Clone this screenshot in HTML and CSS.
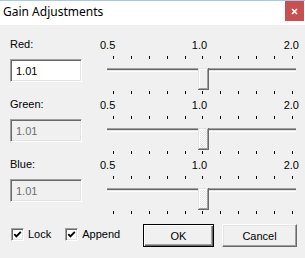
FILE: index.html
```html
<!DOCTYPE html>
<html lang="en">

<head>
    <meta charset="UTF-8">
    <meta name="viewport" content="width=device-width, initial-scale=1.0">
    <title>Gain Adjustments</title>
    <link rel="stylesheet" href="styles.css">
</head>

<body>
    <div class="window">
        <div class="titlebar">
            <span class="title">Gain Adjustments</span>
            <div class="close-btn">
                <svg width="19" height="20" viewBox="0 0 19 20">
                    <rect width="19" height="20" fill="#c75050"/>
                    <path d="M7 8 L12 13 M12 8 L7 13" stroke="#ffffff" stroke-width="1.7"/>
                </svg>
            </div>
        </div>

        <div class="content">
            <div class="row">
                <div class="field">
                    <label for="red">Red:</label>
                    <input id="red" type="text" value="1.01">
                </div>
                <div class="slider">
                    <div class="scale"><span>0.5</span><span>1.0</span><span>2.0</span></div>
                    <div class="ticks"><i></i><i></i><i></i><i></i><i></i><i></i><i></i><i></i><i></i><i></i><i></i></div>
                    <div class="track-area">
                        <div class="track"></div>
                        <svg class="thumb" width="11" height="22" viewBox="0 0 11 22">
                            <rect width="11" height="22" fill="#696969"/>
                            <rect width="10" height="21" fill="#e3e3e3"/>
                            <rect x="1" y="1" width="9" height="20" fill="#a0a0a0"/>
                            <rect x="1" y="1" width="8" height="19" fill="#fff"/>
                            <rect x="2" y="2" width="7" height="18" fill="#f0f0f0"/>
                        </svg>
                    </div>
                    <div class="ticks"><i></i><i></i><i></i><i></i><i></i><i></i><i></i><i></i><i></i><i></i><i></i></div>
                </div>
            </div>

            <div class="row">
                <div class="field">
                    <label for="green">Green:</label>
                    <input id="green" type="text" value="1.01" disabled>
                </div>
                <div class="slider">
                    <div class="scale"><span>0.5</span><span>1.0</span><span>2.0</span></div>
                    <div class="ticks"><i></i><i></i><i></i><i></i><i></i><i></i><i></i><i></i><i></i><i></i><i></i></div>
                    <div class="track-area">
                        <div class="track"></div>
                        <svg class="thumb" width="11" height="22" viewBox="0 0 11 22">
                            <defs><pattern id="dots-g" width="2" height="2" patternUnits="userSpaceOnUse"><rect width="2" height="2" fill="#e3e3e3"/><rect width="1" height="1" fill="#fff"/><rect x="1" y="1" width="1" height="1" fill="#fff"/></pattern></defs>
                            <rect width="11" height="22" fill="#696969"/>
                            <rect width="10" height="21" fill="#e3e3e3"/>
                            <rect x="1" y="1" width="9" height="20" fill="#a0a0a0"/>
                            <rect x="1" y="1" width="8" height="19" fill="#fff"/>
                            <rect x="2" y="2" width="7" height="18" fill="url(#dots-g)"/>
                        </svg>
                    </div>
                    <div class="ticks"><i></i><i></i><i></i><i></i><i></i><i></i><i></i><i></i><i></i><i></i><i></i></div>
                </div>
            </div>

            <div class="row">
                <div class="field">
                    <label for="blue">Blue:</label>
                    <input id="blue" type="text" value="1.01" disabled>
                </div>
                <div class="slider">
                    <div class="scale"><span>0.5</span><span>1.0</span><span>2.0</span></div>
                    <div class="ticks"><i></i><i></i><i></i><i></i><i></i><i></i><i></i><i></i><i></i><i></i><i></i></div>
                    <div class="track-area">
                        <div class="track"></div>
                        <svg class="thumb" width="11" height="22" viewBox="0 0 11 22">
                            <defs><pattern id="dots-b" width="2" height="2" patternUnits="userSpaceOnUse"><rect width="2" height="2" fill="#e3e3e3"/><rect width="1" height="1" fill="#fff"/><rect x="1" y="1" width="1" height="1" fill="#fff"/></pattern></defs>
                            <rect width="11" height="22" fill="#696969"/>
                            <rect width="10" height="21" fill="#e3e3e3"/>
                            <rect x="1" y="1" width="9" height="20" fill="#a0a0a0"/>
                            <rect x="1" y="1" width="8" height="19" fill="#fff"/>
                            <rect x="2" y="2" width="7" height="18" fill="url(#dots-b)"/>
                        </svg>
                    </div>
                    <div class="ticks"><i></i><i></i><i></i><i></i><i></i><i></i><i></i><i></i><i></i><i></i><i></i></div>
                </div>
            </div>
        </div>

        <div class="footer">
            <div class="checks">
                <label class="check">
                    <span class="box"><svg width="9" height="9" viewBox="0 0 9 9"><path d="M1.3 4.2 L3.4 6.4 L7.8 1.8" fill="none" stroke="#000" stroke-width="1.9"/></svg></span>
                    Lock
                </label>
                <label class="check">
                    <span class="box"><svg width="9" height="9" viewBox="0 0 9 9"><path d="M1.3 4.2 L3.4 6.4 L7.8 1.8" fill="none" stroke="#000" stroke-width="1.9"/></svg></span>
                    Append
                </label>
            </div>
            <div class="buttons">
                <button class="btn default" type="button">OK</button>
                <button class="btn cancel" type="button">Cancel</button>
            </div>
        </div>
    </div>
</body>

</html>
```

FILE: styles.css
```css
:root {
    forced-color-adjust: none;
    print-color-adjust: exact;
    color-scheme: light;
}

body {
    margin: 0;
    background: #f0f0f0;
    font-family: 'Liberation Sans', Arial, sans-serif;
    font-size: 11px;
    color: #000;
}

.window {
    width: 305px;
    height: 258px;
    overflow: hidden;
    background: #f0f0f0;
}

.titlebar {
    height: 25px;
    box-sizing: border-box;
    border-top: 1px solid #a9c9ea;
    background: #fff;
    display: flex;
    align-items: flex-start;
}

.title {
    flex: 1;
    font-family: 'Noto Sans', sans-serif;
    font-size: 12px;
    line-height: 16px;
    padding: 3px 0 0 3px;
}

.close-btn {
    flex: none;
    width: 19px;
    height: 20px;
    margin-right: 1px;
    background: #c75050;
}

.close-btn svg {
    display: block;
}

.content {
    padding: 13px 5px 0 10px;
}

.row {
    display: grid;
    grid-template-columns: 72px 1fr;
    column-gap: 18px;
    height: 60px;
}

.field label {
    display: block;
    line-height: 13px;
}

.field input {
    display: block;
    box-sizing: border-box;
    width: 72px;
    height: 23px;
    margin-top: 8px;
    padding: 0 0 0 5px;
    font-family: 'Liberation Sans', Arial, sans-serif;
    font-size: 11px;
    color: #000;
    background: #fff;
    border: 1px solid;
    border-color: #a0a0a0 #fff #fff #a0a0a0;
    box-shadow: inset 1px 1px #696969, inset -1px -1px #e3e3e3;
    outline: none;
}

.field input:disabled {
    background: #f0f0f0;
    color: #6d6d6d;
}

.scale {
    display: flex;
    justify-content: space-between;
    line-height: 13px;
    margin: 1px 1px 0 0;
}

.ticks {
    display: flex;
    justify-content: space-between;
    width: 180px;
    height: 4px;
    margin: 4px 0 0 13px;
}

.ticks + .track-area + .ticks {
    margin-top: 0;
}

.ticks i {
    width: 1px;
    height: 3px;
    background: #000;
}

.track-area {
    position: relative;
    height: 23px;
}

.track {
    height: 4px;
    margin: 8px 4px 0 7px;
    background: linear-gradient(#a0a0a0 0 1px, #696969 1px 2px, #e3e3e3 2px 3px, #fff 3px 4px);
}

.thumb {
    position: absolute;
    left: 98px;
    top: 0;
    display: block;
}

.footer {
    display: flex;
    align-items: center;
    height: 23px;
    margin-top: 6px;
    padding: 0 8px 0 11px;
}

.checks {
    display: flex;
    gap: 14px;
    margin-bottom: 3px;
}

.check {
    display: flex;
    align-items: center;
    gap: 4px;
    line-height: 13px;
}

.box {
    width: 13px;
    height: 13px;
    box-sizing: border-box;
    background: #fff;
    border: 1px solid;
    border-color: #a0a0a0 #fff #fff #a0a0a0;
    box-shadow: inset 1px 1px #696969, inset -1px -1px #e3e3e3;
    display: flex;
    justify-content: center;
    align-items: center;
}

.buttons {
    display: flex;
    gap: 8px;
    margin-left: auto;
}

.btn {
    height: 23px;
    box-sizing: border-box;
    padding: 0;
    font-family: 'Liberation Sans', Arial, sans-serif;
    font-size: 11px;
    color: #000;
    background: #f0f0f0;
    border: 1px solid;
    border-color: #fff #696969 #696969 #fff;
    box-shadow: inset -1px -1px #a0a0a0, inset 1px 1px #e3e3e3;
}

.btn.default {
    width: 71px;
    border-color: #000;
    box-shadow: inset 1px 1px #fff, inset -1px -1px #696969, inset -2px -2px #a0a0a0;
}

.btn.cancel {
    width: 75px;
}
```
